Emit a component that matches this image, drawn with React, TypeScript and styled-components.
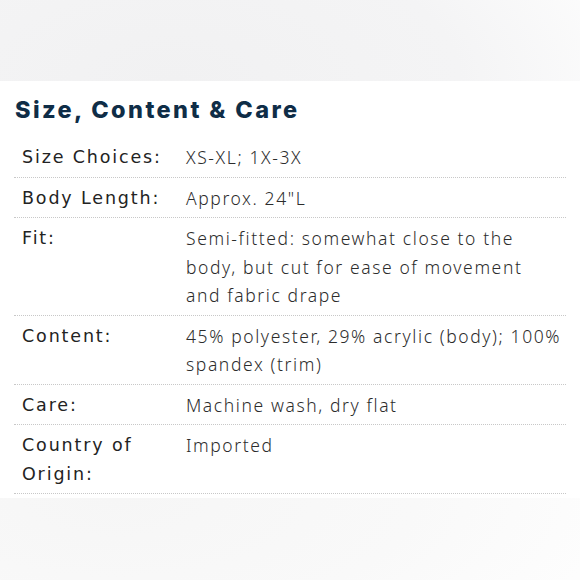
import React from "react"
import styled, { createGlobalStyle } from "styled-components"

type SpecRow = {
  label: string
  value: string
}

const rows: SpecRow[] = [
  { label: "Size Choices:", value: "XS-XL; 1X-3X" },
  { label: "Body Length:", value: "Approx. 24\"L" },
  {
    label: "Fit:",
    value: "Semi-fitted: somewhat close to the body, but cut for ease of movement and fabric drape",
  },
  { label: "Content:", value: "45% polyester, 29% acrylic (body); 100% spandex (trim)" },
  { label: "Care:", value: "Machine wash, dry flat" },
  { label: "Country of Origin:", value: "Imported" },
]

const GlobalStyle = createGlobalStyle`
  html, body {
    margin: 0;
    padding: 0;
    background: #ffffff;
  }
  body {
    font-family: "Noto Sans", "Liberation Sans", sans-serif;
  }
`

let Page = styled.div`
  display: flex;
  flex-direction: column;
  width: 580px;
  height: 580px;
  overflow: hidden;
`

let TopBand = styled.div`
  height: 81px;
  background: radial-gradient(ellipse 520px 260px at 30% 100%, #f1f1f2 0%, #f4f4f5 55%, #ffffff 100%);
`

let Panel = styled.section`
  background: #ffffff;
  padding: 0 14px 4px 14px;
`

let Heading = styled.h2`
  margin: 0;
  height: 56px;
  display: flex;
  align-items: center;
  padding-left: 1px;
  font-family: Inter, "DejaVu Sans", sans-serif;
  font-weight: 800;
  font-size: 23.5px;
  letter-spacing: 2.4px;
  color: #0f2d47;
`

let Table = styled.div`
  display: flex;
  flex-direction: column;
`

let Row = styled.div`
  display: grid;
  grid-template-columns: 164px 377px;
  padding: 6px 0 5px 8px;
  border-bottom: 1px dotted #c8c8c8;
  line-height: 28.5px;
`

let Label = styled.div`
  font-family: "DejaVu Sans", "Noto Sans", sans-serif;
  font-size: 17.5px;
  font-weight: 400;
  color: #232323;
  letter-spacing: 1.85px;
  padding-right: 12px;
`

let Value = styled.div`
  font-size: 17.5px;
  font-weight: 300;
  letter-spacing: 1.6px;
  color: #2c2c2c;
`

let BottomBand = styled.div`
  flex: 1;
  background: radial-gradient(ellipse 500px 200px at 20% 0%, #f6f6f6 0%, #f9f9f9 60%, #fdfdfd 100%);
`

export default function App() {
  return (
    <Page>
      <GlobalStyle />
      <TopBand />
      <Panel>
        <Heading>Size, Content &amp; Care</Heading>
        <Table>
          {rows.map(r => (
            <Row key={r.label}>
              <Label>{r.label}</Label>
              <Value>{r.value}</Value>
            </Row>
          ))}
        </Table>
      </Panel>
      <BottomBand />
    </Page>
  )
}
